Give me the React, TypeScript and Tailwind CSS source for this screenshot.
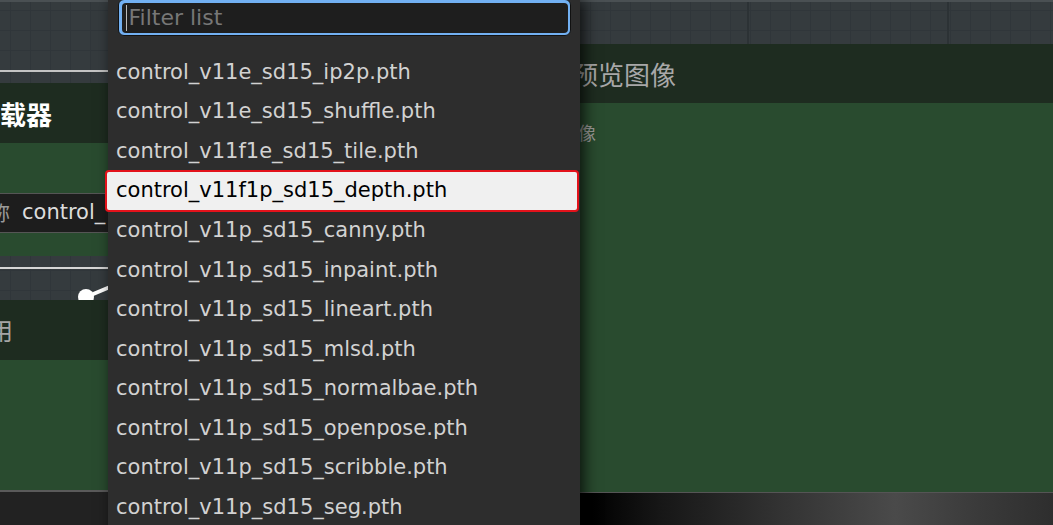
import React from 'react';

const models = [
  'control_v11e_sd15_ip2p.pth',
  'control_v11e_sd15_shuffle.pth',
  'control_v11f1e_sd15_tile.pth',
  'control_v11f1p_sd15_depth.pth',
  'control_v11p_sd15_canny.pth',
  'control_v11p_sd15_inpaint.pth',
  'control_v11p_sd15_lineart.pth',
  'control_v11p_sd15_mlsd.pth',
  'control_v11p_sd15_normalbae.pth',
  'control_v11p_sd15_openpose.pth',
  'control_v11p_sd15_scribble.pth',
  'control_v11p_sd15_seg.pth',
];

const SELECTED = 'control_v11f1p_sd15_depth.pth';

const cjk = "font-['Noto_Sans_CJK_SC','Noto_Sans',sans-serif]";
const menuFont = "font-['DejaVu_Sans',sans-serif]";

const Canvas: React.FC<{ children: React.ReactNode }> = ({ children }) => (
  <div className="relative w-[1053px] h-[525px] overflow-hidden bg-[#353b3e] bg-[linear-gradient(90deg,#2c3235_2px,transparent_2px),linear-gradient(#30363a_1px,transparent_1px),linear-gradient(90deg,#30363a_1px,transparent_1px)] bg-[size:200px_200px,20px_20px,20px_20px] bg-[position:147px_0,0_10px,10px_0]">
    <div className="h-[2px] bg-[#4a5053]" />
    {children}
  </div>
);

// Links between nodes (mostly hidden behind the menu)
const Wires = () => (
  <>
    <div className="absolute left-0 top-[70px] w-[120px] h-[2px] bg-[#c4c4c4]" />
    <div className="absolute left-0 top-[267px] w-[120px] h-[2px] bg-[#d6d6d6]" />
    <svg className="absolute left-[70px] top-[278px]" width="50" height="24" viewBox="0 0 50 24">
      <path d="M16 19 L40 9" stroke="#ffffff" strokeWidth="4" strokeLinecap="round" />
      <circle cx="16" cy="19" r="8" fill="#ffffff" />
    </svg>
  </>
);

// Left loader node, clipped by the menu
const LoaderNode = () => (
  <div className="absolute left-0 top-[83px] w-[108px] flex flex-col overflow-hidden">
    <div className={`h-[60px] bg-[#1e2c20] flex items-center text-[26px] font-bold text-white whitespace-nowrap ${cjk}`}>
      载器
    </div>
    <div className="h-[113px] bg-[#294b2f] pt-[50px]">
      <div className="h-[40px] bg-[#1d1d1d] border-y border-[#555] flex items-center overflow-hidden whitespace-nowrap">
        <span className={`-ml-[10px] text-[20px] text-[#9a9a9a] ${cjk}`}>称</span>
        <span className={`ml-[12px] text-[21px] text-[#dcdcdc] ${menuFont}`}>control_</span>
      </div>
    </div>
  </div>
);

const ApplyNode = () => (
  <div className="absolute left-0 top-[300px] w-[108px] flex flex-col overflow-hidden">
    <div className={`h-[60px] bg-[#1e2c20] flex items-center text-[24px] text-[#a5a5a5] ${cjk}`}>
      <span className="-ml-[11px]">用</span>
    </div>
    <div className="h-[130px] bg-[#294b2f]" />
    <div className="h-[2px] bg-[#5a5a5a]" />
    <div className="h-[40px] bg-[#222]" />
  </div>
);

const PreviewNode = () => (
  <div className="absolute left-[540px] top-[44px] right-0 h-[448px] flex flex-col">
    <div className={`h-[59px] bg-[#1e2c20] flex items-center pl-[32px] text-[26px] text-[#a8a8a8] ${cjk}`}>
      预览图像
    </div>
    <div className={`flex-1 bg-[#294b2f] pl-[20px] pt-[16px] text-[18px] leading-[26px] text-[#9c9c9c] ${cjk}`}>
      图像
    </div>
  </div>
);

const BottomBar = () => (
  <div className="absolute left-[560px] right-0 top-[492px] h-[40px] bg-[linear-gradient(90deg,#000_6%,#161616_20%,#333_45%,#4a4a4a_68%,#3a3a3a_85%,#2e2e2e_100%)] border-t border-[#555]" />
);

const FilterMenu = () => (
  <div className="absolute left-[108px] top-0 w-[472px] h-[540px] bg-[#2d2d2d] shadow-[4px_0_14px_rgba(0,0,0,0.75)] flex flex-col">
    <div className="ml-[10px] mr-[9px] h-[37px] -mt-[1px] rounded-[6px] border border-[#111] bg-[#72b0f2] p-[2.5px]">
      <div className={`h-full rounded-[4px] bg-[#1e1e1e] flex items-center pl-[4px] text-[22px] text-[#777] ${menuFont}`}>
        <span className="w-px h-[26px] bg-[#bbb] mr-[2px]" />
        Filter list
      </div>
    </div>
    <div className={`mt-[16.5px] flex flex-col text-[21px] ${menuFont}`}>
      {models.map((m) =>
        m === SELECTED ? (
          <div
            key={m}
            className="-ml-[3px] mr-[1px] -my-[1px] h-[41.6px] flex items-center pl-[9px] rounded-[4px] border-2 border-[#e3121b] bg-[#f0f0f0] text-black whitespace-nowrap"
          >
            {m}
          </div>
        ) : (
          <div key={m} className="h-[39.6px] flex items-center pl-[8px] text-[#d2d2d2] whitespace-nowrap">
            {m}
          </div>
        )
      )}
    </div>
  </div>
);

const App: React.FC = () => {
  return (
    <Canvas>
      <Wires />
      <LoaderNode />
      <ApplyNode />
      <PreviewNode />
      <BottomBar />
      <FilterMenu />
    </Canvas>
  );
};

export default App;
